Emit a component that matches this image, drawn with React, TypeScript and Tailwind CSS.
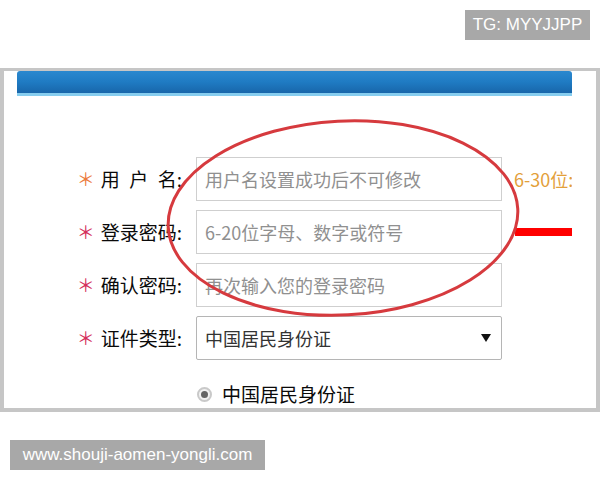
import React from "react";

const FONT = { fontFamily: '"Noto Sans CJK SC", "Noto Sans", sans-serif' };
const LATIN = { fontFamily: '"Liberation Sans", Arial, sans-serif' };

function Row({
  label,
  star,
  children,
  extra,
}: {
  label: string;
  star: string;
  children: React.ReactNode;
  extra?: React.ReactNode;
}) {
  return (
    <div className="flex items-center h-[44px]">
      <div className="w-[180px] shrink-0 flex items-center justify-end pr-[2px]">
        <span className={`text-[18px] leading-none mr-[6px] -mt-[2px] ${star}`}>＊</span>
        <span className="text-[19px] text-[#0a0a0a] whitespace-pre">{label}</span>
      </div>
      <div className="ml-[12px] shrink-0">{children}</div>
      {extra}
    </div>
  );
}

function TextBox({ placeholder }: { placeholder: string }) {
  return (
    <div className="w-[306px] h-[44px] border border-[#cfcfcf] bg-white flex items-center px-[8px] text-[18px] text-[#909090]">
      {placeholder}
    </div>
  );
}

export default function App() {
  return (
    <div className="w-[600px] h-[480px] bg-white relative overflow-hidden" style={FONT}>
      <div className="h-[68px] flex justify-end pt-[10px] pr-[10px]">
        <div
          className="w-[125px] h-[30px] bg-[#a8a8a8] text-white text-[17px] flex items-center justify-center"
          style={LATIN}
        >
          TG: MYYJJPP
        </div>
      </div>

      <div className="h-[344px] border-x-[4px] border-t-[3px] border-b-[4px] border-[#c6c6c6] bg-white">
        <div className="w-[568px] h-full overflow-hidden">
          <div className="ml-[13px] w-[555px] h-[25px] rounded-t-[3px] bg-gradient-to-b from-[#2a88cf] via-[#1f7bc3] to-[#1866aa] border-b-[3px] border-[#86cdef]" />

          <div className="mt-[61px] flex flex-col gap-[9px]">
            <Row
              label={"用\u2002户\u2002名:"}
              star="text-[#ec7a3c]"
              extra={<span className="ml-[12px] text-[18px] text-[#e3a03a] whitespace-nowrap">6-30位:</span>}
            >
              <TextBox placeholder="用户名设置成功后不可修改" />
            </Row>
            <Row
              label="登录密码:"
              star="text-[#d42f5c]"
              extra={<div className="ml-[13px] w-[60px] h-[8px] bg-[#ff0000] shrink-0" />}
            >
              <TextBox placeholder="6-20位字母、数字或符号" />
            </Row>
            <Row label="确认密码:" star="text-[#d42f5c]">
              <TextBox placeholder="再次输入您的登录密码" />
            </Row>
            <Row label="证件类型:" star="text-[#d42f5c]">
              <div className="w-[306px] h-[44px] border border-[#b5b5b5] rounded-[2px] bg-white flex items-center justify-between pl-[8px] pr-[10px] text-[18px] text-[#333]">
                <span>中国居民身份证</span>
                <svg width="10" height="10" viewBox="0 0 10 10">
                  <path d="M0 1 H10 L5 9 Z" fill="#111" />
                </svg>
              </div>
            </Row>
          </div>

          <div className="mt-[20px] ml-[193px] flex items-center gap-[10px]">
            <div className="w-[15px] h-[15px] rounded-full border-[2px] border-[#c9c9c9] bg-[#f3f3f3] flex items-center justify-center">
              <div className="w-[7px] h-[7px] rounded-full bg-[#666]" />
            </div>
            <span className="text-[19px] text-[#0a0a0a]">中国居民身份证</span>
          </div>
        </div>
      </div>

      <div
        className="mt-[28px] ml-[10px] w-[255px] h-[30px] bg-[#a8a8a8] text-white text-[17px] flex items-center justify-center"
        style={LATIN}
      >
        www.shouji-aomen-yongli.com
      </div>

      <svg className="absolute left-0 top-0 pointer-events-none" width="600" height="480">
        <ellipse
          cx="343"
          cy="218"
          rx="175"
          ry="97"
          fill="none"
          stroke="#d63a3e"
          strokeWidth="3"
          transform="rotate(-3 343 218)"
        />
      </svg>
    </div>
  );
}
